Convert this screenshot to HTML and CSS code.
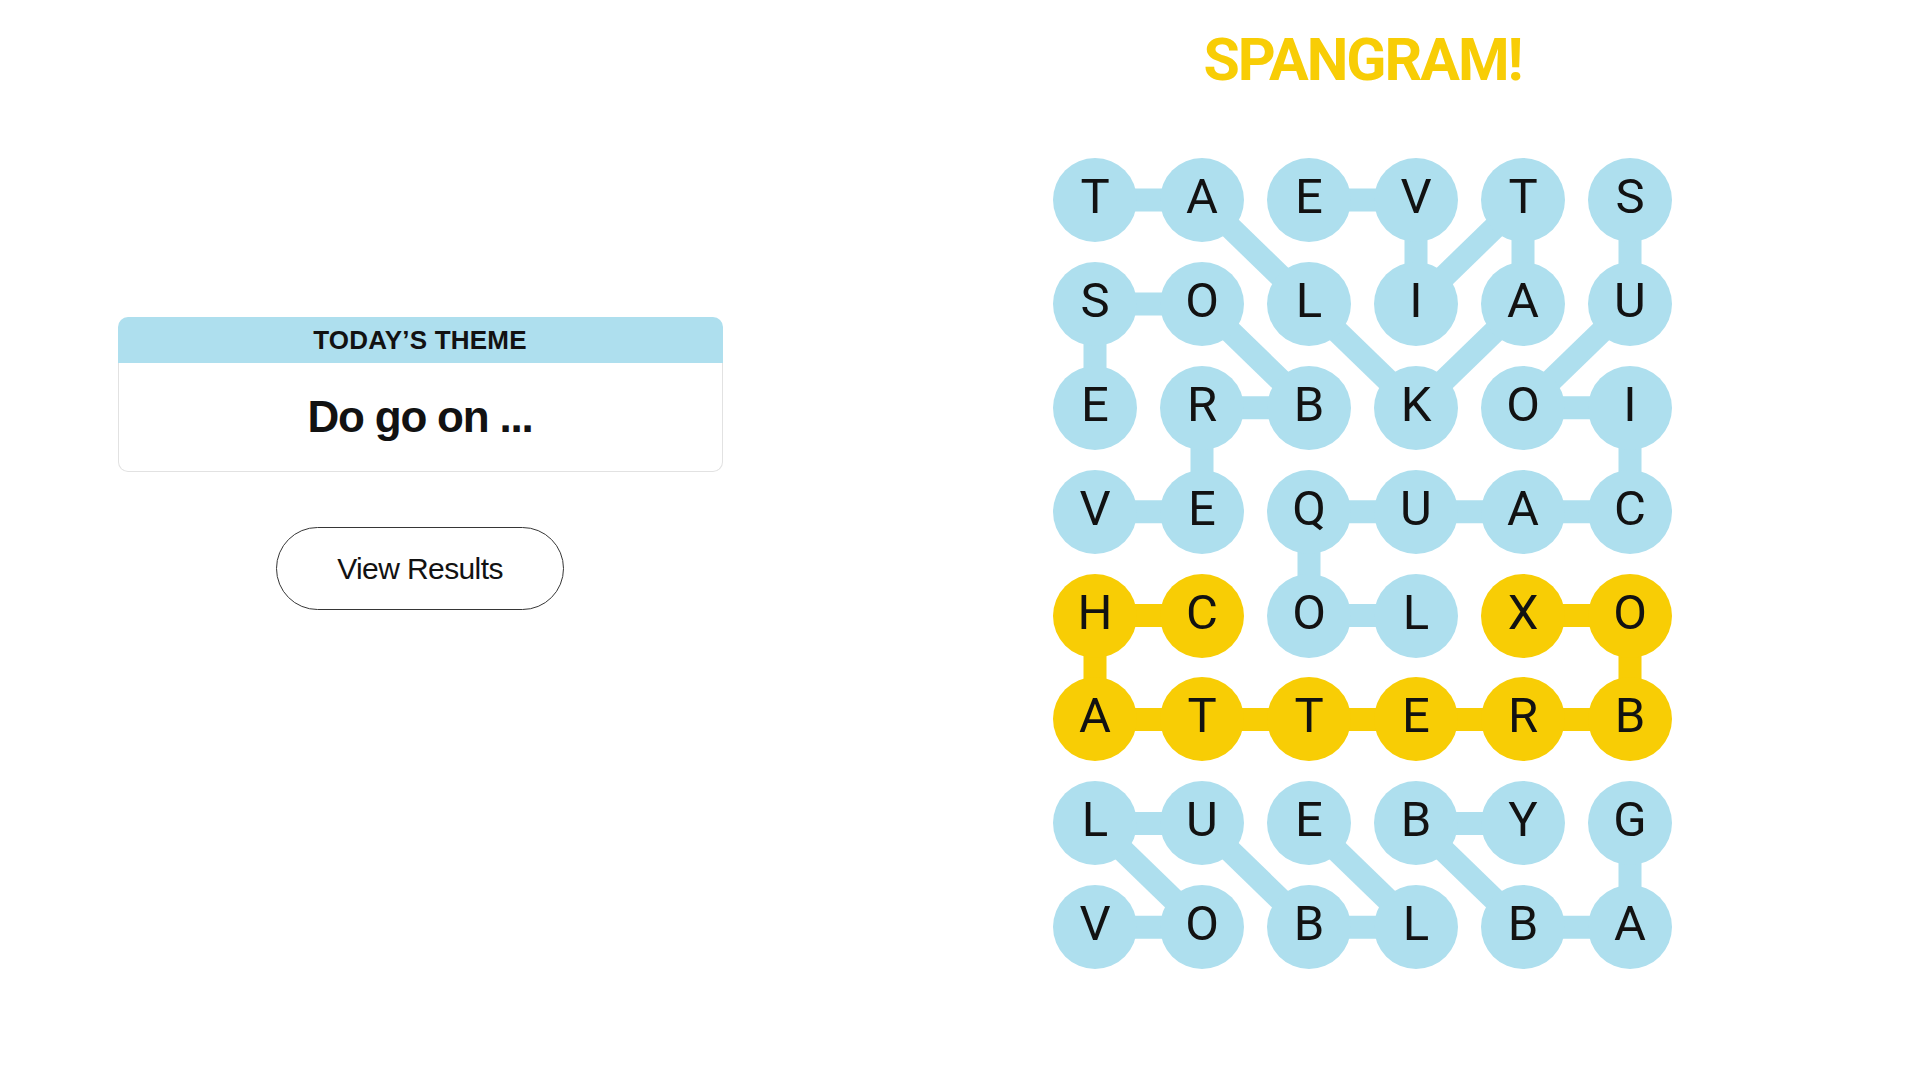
FILE: index.html
```html
<html>
    <head>
        <title>Strands</title>
        <link rel="stylesheet" href="styles.css">
    </head>
    <body>
        <div class="page">
            <!-- theme + results -->
            <section class="side">
                <div class="theme-card">
                    <div class="theme-head">TODAY’S THEME</div>
                    <div class="theme-body">Do go on ...</div>
                </div>
                <button class="results-btn">View Results</button>
            </section>

            <!-- board -->
            <section class="play">
                <h1 class="status">SPANGRAM!</h1>
                <div class="board">
                    <svg class="board-paths" width="619" height="812" viewBox="0 0 619 812">
                        <g class="path-word">
                            <line x1="42" y1="42" x2="149" y2="42"/>
                            <line x1="149" y1="42" x2="256" y2="145.9"/>
                            <line x1="256" y1="42" x2="363" y2="42"/>
                            <line x1="363" y1="42" x2="363" y2="145.9"/>
                            <line x1="363" y1="145.9" x2="470" y2="42"/>
                            <line x1="470" y1="42" x2="470" y2="145.9"/>
                            <line x1="577" y1="42" x2="577" y2="145.9"/>
                            <line x1="42" y1="145.9" x2="149" y2="145.9"/>
                            <line x1="42" y1="145.9" x2="42" y2="249.8"/>
                            <line x1="149" y1="145.9" x2="256" y2="249.8"/>
                            <line x1="256" y1="145.9" x2="363" y2="249.8"/>
                            <line x1="470" y1="145.9" x2="363" y2="249.8"/>
                            <line x1="577" y1="145.9" x2="470" y2="249.8"/>
                            <line x1="149" y1="249.8" x2="256" y2="249.8"/>
                            <line x1="149" y1="249.8" x2="149" y2="353.7"/>
                            <line x1="470" y1="249.8" x2="577" y2="249.8"/>
                            <line x1="577" y1="249.8" x2="577" y2="353.7"/>
                            <line x1="42" y1="353.7" x2="149" y2="353.7"/>
                            <line x1="256" y1="353.7" x2="577" y2="353.7"/>
                            <line x1="256" y1="353.7" x2="256" y2="457.6"/>
                            <line x1="256" y1="457.6" x2="363" y2="457.6"/>
                            <line x1="42" y1="665.4" x2="149" y2="665.4"/>
                            <line x1="42" y1="665.4" x2="149" y2="769.3"/>
                            <line x1="149" y1="665.4" x2="256" y2="769.3"/>
                            <line x1="256" y1="665.4" x2="363" y2="769.3"/>
                            <line x1="363" y1="665.4" x2="470" y2="665.4"/>
                            <line x1="363" y1="665.4" x2="470" y2="769.3"/>
                            <line x1="577" y1="665.4" x2="577" y2="769.3"/>
                            <line x1="42" y1="769.3" x2="149" y2="769.3"/>
                            <line x1="256" y1="769.3" x2="363" y2="769.3"/>
                            <line x1="470" y1="769.3" x2="577" y2="769.3"/>
                        </g>
                        <polyline class="path-spangram" points="149,457.6 42,457.6 42,561.5 577,561.5 577,457.6 470,457.6"/>
                    </svg>

                    <div class="cell">T</div><div class="cell">A</div><div class="cell">E</div><div class="cell">V</div><div class="cell">T</div><div class="cell">S</div>
                    <div class="cell">S</div><div class="cell">O</div><div class="cell">L</div><div class="cell">I</div><div class="cell">A</div><div class="cell">U</div>
                    <div class="cell">E</div><div class="cell">R</div><div class="cell">B</div><div class="cell">K</div><div class="cell">O</div><div class="cell">I</div>
                    <div class="cell">V</div><div class="cell">E</div><div class="cell">Q</div><div class="cell">U</div><div class="cell">A</div><div class="cell">C</div>
                    <div class="cell gold">H</div><div class="cell gold">C</div><div class="cell">O</div><div class="cell">L</div><div class="cell gold">X</div><div class="cell gold">O</div>
                    <div class="cell gold">A</div><div class="cell gold">T</div><div class="cell gold">T</div><div class="cell gold">E</div><div class="cell gold">R</div><div class="cell gold">B</div>
                    <div class="cell">L</div><div class="cell">U</div><div class="cell">E</div><div class="cell">B</div><div class="cell">Y</div><div class="cell">G</div>
                    <div class="cell">V</div><div class="cell">O</div><div class="cell">B</div><div class="cell">L</div><div class="cell">B</div><div class="cell">A</div>
                </div>
            </section>
        </div>
    </body>
</html>
```

FILE: styles.css
```css
* {
    padding: 0;
    margin: 0;
    box-sizing: border-box;
}

body {
    background: #fff;
    color: #121212;
    font-family: "Liberation Sans", Arial, sans-serif;
}

.page {
    display: flex;
    width: 1920px;
    height: 1080px;
}

/* left column */
.side {
    width: 840px;
    display: flex;
    flex-direction: column;
    align-items: center;
    padding-top: 317px;
}

.theme-card {
    width: 605px;
}

.theme-head {
    height: 46px;
    line-height: 46px;
    background: #aedfee;
    border-radius: 10px 10px 0 0;
    text-align: center;
    font-size: 26px;
    font-weight: bold;
    letter-spacing: 0.2px;
}

.theme-body {
    height: 109px;
    line-height: 107px;
    border: 1px solid #e2e2e2;
    border-top: 0;
    border-radius: 0 0 10px 10px;
    text-align: center;
    font-size: 44px;
    font-weight: bold;
    letter-spacing: -1.2px;
}

.results-btn {
    margin-top: 55px;
    width: 288px;
    height: 83px;
    border: 1.5px solid #363636;
    border-radius: 42px;
    background: #fff;
    color: #121212;
    font-family: "Liberation Sans", Arial, sans-serif;
    font-size: 30px;
    letter-spacing: -0.6px;
}

/* right column */
.play {
    flex: 1;
    display: flex;
    flex-direction: column;
    align-items: center;
    padding-top: 31px;
    padding-right: 35px;
}

.status {
    height: 58px;
    line-height: 58px;
    margin-bottom: 69px;
    color: #f8cd05;
    font-family: Roboto, "Liberation Sans", sans-serif;
    font-size: 59px;
    font-weight: bold;
    letter-spacing: -2px;
}

.board {
    position: relative;
    display: grid;
    grid-template-columns: repeat(6, 84px);
    grid-auto-rows: 84px;
    column-gap: 23px;
    row-gap: 19.9px;
}

.board-paths {
    position: absolute;
    top: 0;
    left: 0;
}

.path-word line {
    stroke: #aedfee;
    stroke-width: 23;
}

.path-spangram {
    fill: none;
    stroke: #f8cd05;
    stroke-width: 23;
}

.cell {
    position: relative;
    width: 84px;
    height: 84px;
    border-radius: 50%;
    background: #aedfee;
    text-align: center;
    line-height: 77px;
    font-family: Roboto, "Liberation Sans", sans-serif;
    font-size: 49px;
}

.cell.gold {
    background: #f8cd05;
}
```
